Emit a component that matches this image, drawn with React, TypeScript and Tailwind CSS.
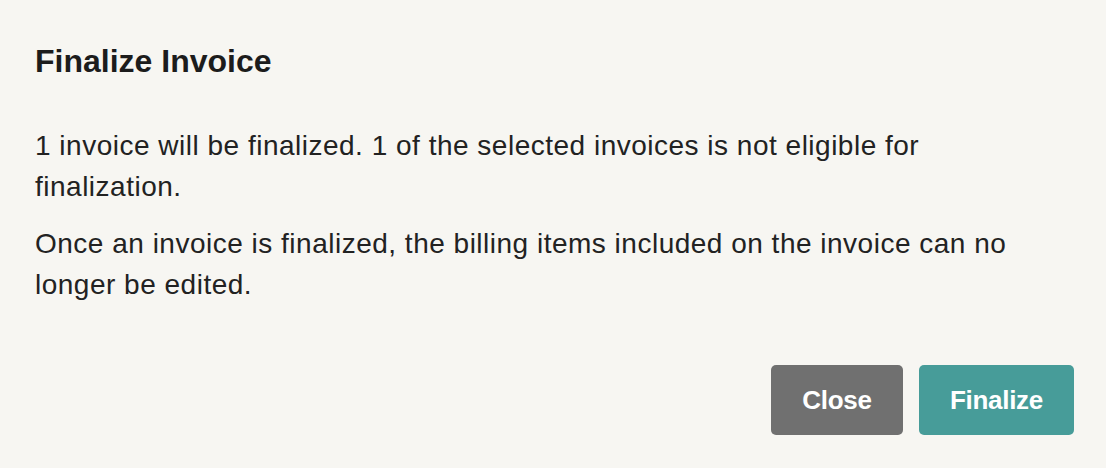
import React from 'react';

const App: React.FC = () => {
  return (
    <div
      className="w-[1106px] h-[468px] bg-[#f7f6f2] text-[#1c1c1c] flex flex-col px-[35px] pt-[41px]"
      style={{ fontFamily: '"Liberation Sans", Arial, sans-serif' }}
    >
      <h1 className="text-[32px] leading-[40px] font-bold">Finalize Invoice</h1>

      <div className="mt-[44px] flex flex-col gap-[16px] text-[28px] leading-[41px] tracking-[0.5px] text-[#222] max-w-[990px]">
        <p>1 invoice will be finalized. 1 of the selected invoices is not eligible for finalization.</p>
        <p>Once an invoice is finalized, the billing items included on the invoice can no longer be edited.</p>
      </div>

      <div className="mt-auto mb-[33px] mr-[-3px] flex justify-end gap-[16px]">
        <button className="w-[132px] h-[70px] rounded-[5px] bg-[#707070] text-white text-[26px] font-bold tracking-[-0.3px]">
          Close
        </button>
        <button className="w-[155px] h-[70px] rounded-[5px] bg-[#479c99] text-white text-[26px] font-bold tracking-[-0.3px]">
          Finalize
        </button>
      </div>
    </div>
  );
};

export default App;
